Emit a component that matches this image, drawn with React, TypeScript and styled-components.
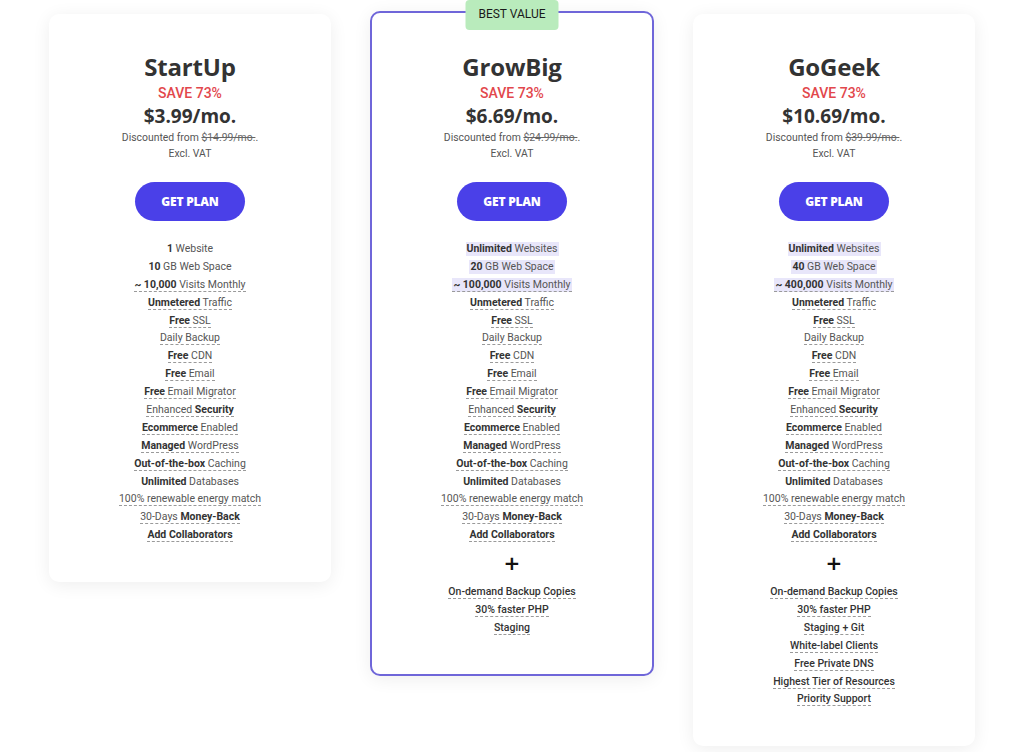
import React from "react";
import styled, { createGlobalStyle } from "styled-components";

const Global = createGlobalStyle`
  html, body { margin: 0; padding: 0; background: #ffffff; }
  body { font-family: Roboto, "Liberation Sans", sans-serif; color: #333; }
  * { box-sizing: border-box; }
`;

type Seg = { t: string; b?: boolean };
type Feature = { segs: Seg[]; line?: boolean; hl?: boolean };
type Plan = {
  name: string;
  price: string;
  was: string;
  features: Feature[];
  extras: string[];
  featured?: boolean;
};

const common = (): Feature[] => [
  { segs: [{ t: "Unmetered", b: true }, { t: " Traffic" }], line: true },
  { segs: [{ t: "Free", b: true }, { t: " SSL" }], line: true },
  { segs: [{ t: "Daily Backup" }], line: true },
  { segs: [{ t: "Free", b: true }, { t: " CDN" }], line: true },
  { segs: [{ t: "Free", b: true }, { t: " Email" }], line: true },
  { segs: [{ t: "Free", b: true }, { t: " Email Migrator" }], line: true },
  { segs: [{ t: "Enhanced " }, { t: "Security", b: true }], line: true },
  { segs: [{ t: "Ecommerce", b: true }, { t: " Enabled" }], line: true },
  { segs: [{ t: "Managed", b: true }, { t: " WordPress" }], line: true },
  { segs: [{ t: "Out-of-the-box", b: true }, { t: " Caching" }], line: true },
  { segs: [{ t: "Unlimited", b: true }, { t: " Databases" }] },
  { segs: [{ t: "100% renewable energy match" }], line: true },
  { segs: [{ t: "30-Days " }, { t: "Money-Back", b: true }], line: true },
  { segs: [{ t: "Add Collaborators", b: true }], line: true },
];

const plans: Plan[] = [
  {
    name: "StartUp",
    price: "$3.99/mo.",
    was: "$14.99/mo.",
    features: [
      { segs: [{ t: "1", b: true }, { t: " Website" }] },
      { segs: [{ t: "10", b: true }, { t: " GB Web Space" }] },
      { segs: [{ t: "~ 10,000", b: true }, { t: " Visits Monthly" }], line: true },
      ...common(),
    ],
    extras: [],
  },
  {
    name: "GrowBig",
    price: "$6.69/mo.",
    was: "$24.99/mo.",
    featured: true,
    features: [
      { segs: [{ t: "Unlimited", b: true }, { t: " Websites" }], hl: true },
      { segs: [{ t: "20", b: true }, { t: " GB Web Space" }], hl: true },
      { segs: [{ t: "~ 100,000", b: true }, { t: " Visits Monthly" }], line: true, hl: true },
      ...common(),
    ],
    extras: ["On-demand Backup Copies", "30% faster PHP", "Staging"],
  },
  {
    name: "GoGeek",
    price: "$10.69/mo.",
    was: "$39.99/mo.",
    features: [
      { segs: [{ t: "Unlimited", b: true }, { t: " Websites" }], hl: true },
      { segs: [{ t: "40", b: true }, { t: " GB Web Space" }], hl: true },
      { segs: [{ t: "~ 400,000", b: true }, { t: " Visits Monthly" }], line: true, hl: true },
      ...common(),
    ],
    extras: [
      "On-demand Backup Copies",
      "30% faster PHP",
      "Staging + Git",
      "White-label Clients",
      "Free Private DNS",
      "Highest Tier of Resources",
      "Priority Support",
    ],
  },
];

const Page = styled.div`
  display: flex;
  justify-content: center;
  align-items: flex-start;
  gap: 39px;
  padding-top: 14px;
  width: 1024px;
  height: 752px;
  overflow: hidden;
`;

const Card = styled.div<{ $featured?: boolean }>`
  position: relative;
  width: ${(p) => (p.$featured ? "284px" : "282px")};
  margin-top: ${(p) => (p.$featured ? "-3px" : "0")};
  background: #fff;
  border-radius: 10px;
  border: ${(p) => (p.$featured ? "2px solid #6f66d9" : "none")};
  box-shadow: 0 3px 18px rgba(0, 0, 0, 0.07);
  padding: ${(p) => (p.$featured ? "39px 0 37px" : "38px 0 38px")};
  display: flex;
  flex-direction: column;
  align-items: center;
  text-align: center;
`;

const Badge = styled.div`
  position: absolute;
  top: -13px;
  left: 50%;
  transform: translateX(-50%);
  width: 93px;
  height: 30px;
  padding-top: 6px;
  background: #b9ebbc;
  border-radius: 4px;
  font-family: Roboto, "Liberation Sans", sans-serif;
  font-size: 12px;
  font-weight: 400;
  color: #1a1a1a;
  line-height: 16px;
`;

const Title = styled.h2`
  margin: 0;
  font-family: "Open Sans", "Liberation Sans", sans-serif;
  font-weight: 700;
  font-size: 24px;
  line-height: 30px;
  color: #333;
  letter-spacing: -0.2px;
`;

const Save = styled.div`
  font-family: Roboto, "Liberation Sans", sans-serif;
  font-weight: 500;
  font-size: 14px;
  line-height: 22px;
  color: #e2474c;
`;

const Price = styled.div`
  font-family: "Open Sans", "Liberation Sans", sans-serif;
  font-weight: 700;
  font-size: 19px;
  line-height: 24px;
  color: #333;
`;

const Note = styled.div<{ $first?: boolean }>`
  margin-top: ${(p) => (p.$first ? "2px" : "0")};
  font-family: Roboto, "Liberation Sans", sans-serif;
  font-size: 10.4px;
  line-height: 16px;
  color: #555;
  s { color: #666; }
`;

const Button = styled.button`
  margin-top: 20px;
  width: 110px;
  height: 39px;
  border: none;
  border-radius: 20px;
  background: #4a40e8;
  color: #fff;
  font-family: "Open Sans", "Liberation Sans", sans-serif;
  font-weight: 800;
  font-size: 12px;
  letter-spacing: -0.2px;
  cursor: pointer;
`;

const List = styled.ul<{ $gap?: number }>`
  list-style: none;
  margin: ${(p) => p.$gap ?? 19}px 0 0;
  padding: 0;
  display: flex;
  flex-direction: column;
  align-items: center;
`;

const Item = styled.li`
  height: 17.9px;
  display: flex;
  align-items: center;
  justify-content: center;
  font-family: Roboto, "Liberation Sans", sans-serif;
  font-size: 10.5px;
  color: #555;
`;

const Label = styled.span<{ $line?: boolean; $hl?: boolean; $strong?: boolean }>`
  display: inline-block;
  line-height: 13px;
  padding: ${(p) => (p.$hl ? "0 1px" : "0")};
  background: ${(p) => (p.$hl ? "#e8e6fa" : "transparent")};
  border-bottom: 1px dashed ${(p) => (p.$line ? "#9a9a9a" : "transparent")};
  font-weight: ${(p) => (p.$strong ? 500 : 400)};
  color: ${(p) => (p.$strong ? "#333" : "#555")};
  b { font-weight: 700; color: #333; }
`;

const Plus = styled.div`
  margin-top: 2px;
  height: 34px;
  display: flex;
  align-items: center;
  justify-content: center;
  font-family: "DejaVu Sans", sans-serif;
  font-weight: 700;
  font-size: 20px;
  color: #111;
`;

export default function App() {
  return (
    <>
      <Global />
      <Page>
        {plans.map((p) => (
          <Card key={p.name} $featured={p.featured}>
            {p.featured && <Badge>BEST VALUE</Badge>}
            <Title>{p.name}</Title>
            <Save>SAVE 73%</Save>
            <Price>{p.price}</Price>
            <Note $first>
              Discounted from <s>{p.was}</s>.
            </Note>
            <Note>Excl. VAT</Note>
            <Button>GET PLAN</Button>
            <List>
              {p.features.map((f, i) => (
                <Item key={i}>
                  <Label $line={f.line} $hl={f.hl}>
                    {f.segs.map((s, j) => (s.b ? <b key={j}>{s.t}</b> : <React.Fragment key={j}>{s.t}</React.Fragment>))}
                  </Label>
                </Item>
              ))}
            </List>
            {p.extras.length > 0 && (
              <>
                <Plus>+</Plus>
                <List $gap={3}>
                  {p.extras.map((e) => (
                    <Item key={e}>
                      <Label $line $strong>
                        {e}
                      </Label>
                    </Item>
                  ))}
                </List>
              </>
            )}
          </Card>
        ))}
      </Page>
    </>
  );
}
